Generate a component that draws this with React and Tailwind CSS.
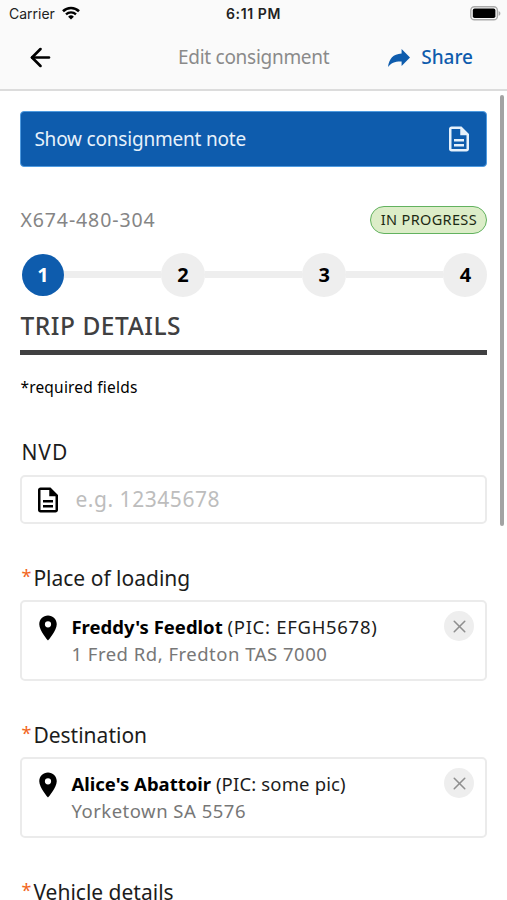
import { MdOutlineDescription, MdPlace } from "react-icons/md";
import { ArrowLeft, X } from "lucide-react";

const stops = [
  {
    label: "Place of loading",
    name: "Freddy's Feedlot",
    pic: "(PIC: EFGH5678)",
    picClass: "tracking-[0.7px]",
    address: "1 Fred Rd, Fredton TAS 7000",
  },
  {
    label: "Destination",
    name: "Alice's Abattoir",
    pic: "(PIC: some pic)",
    picClass: "tracking-[0.15px]",
    address: "Yorketown SA 5576",
  },
];

const StatusBar = () => (
  <div className="relative flex h-[26px] items-center justify-between pl-[9px] pr-[6px] font-['Inter','Liberation_Sans',sans-serif] text-[#222]">
    <div className="flex items-center gap-[7px] text-[14px]">
      <span>Carrier</span>
      <svg width="18" height="14" viewBox="0 0 18 14" fill="none">
        <path d="M1 5.2a11.5 11.5 0 0 1 16 0" stroke="#000" strokeWidth="2.6" />
        <path d="M4 8.4a7.2 7.2 0 0 1 10 0" stroke="#000" strokeWidth="2.3" />
        <path d="M9 13.6 6.1 10.7a4.2 4.2 0 0 1 5.8 0z" fill="#000" />
      </svg>
    </div>
    <span className="absolute left-1/2 -translate-x-1/2 whitespace-nowrap text-[14px] font-semibold tracking-[0.6px]">
      6:11 PM
    </span>
    <svg width="31" height="15" viewBox="0 0 31 15">
      <rect x="0.8" y="0.8" width="26.6" height="13" rx="3.6" fill="#fafafa" stroke="#aaa" strokeWidth="1.4" />
      <rect x="2.8" y="2.6" width="22.6" height="9.4" rx="1.8" fill="#000" />
      <path d="M28.6 5v4.8c1-.4 1.8-1.3 1.8-2.4s-.8-2-1.8-2.4z" fill="#aaa" />
    </svg>
  </div>
);

const Header = () => (
  <header className="h-[91px] border-b-2 border-[#dcdcdc] bg-[#fafafa]">
    <StatusBar />
    <div className="relative flex h-[62px] items-center justify-between pl-[26px] pr-[34px]">
      <button>
        <ArrowLeft size={29} strokeWidth={2.2} className="text-black" />
      </button>
      <h1 className="absolute left-[178px] whitespace-nowrap text-[19px] tracking-[-0.28px] text-[#8a8a8a]">
        Edit consignment
      </h1>
      <button className="flex items-center gap-[11px] text-[19px] font-medium text-[#0e5cad]">
        <svg width="22" height="18" viewBox="0 0 22 18" fill="currentColor" className="mt-px">
          <path d="M22 8.6 13.6 0v4.4C5 5 1.2 9.5 0 18c3.2-4.3 7-5.8 13.6-5.6V17z" />
        </svg>
        Share
      </button>
    </div>
  </header>
);

const Stepper = () => (
  <div className="flex h-[45px] items-center text-[20px] font-bold text-black">
    <div className="ml-[1.5px] flex size-[42px] items-center justify-center rounded-full bg-[#0e5cad] text-white">
      1
    </div>
    {[2, 3, 4].map((step) => (
      <div key={step} className="flex flex-1 items-center">
        <div className="h-[7px] flex-1 bg-[#eee]" />
        <div className="flex size-11 items-center justify-center rounded-full bg-[#eee]">
          {step}
        </div>
      </div>
    ))}
  </div>
);

const Label = ({ children, required }) => (
  <div className="flex h-8 items-center pl-px pt-0.5 text-[21px] text-[#1c1c1c]">
    {required && (
      <span className="w-3 pb-1.5 text-[18px] leading-5 text-[#f26522]">*</span>
    )}
    <span className="whitespace-nowrap">{children}</span>
  </div>
);

const StopCard = ({ stop }) => (
  <section className="mt-[38px]">
    <Label required>{stop.label}</Label>
    <div className="mt-[6px] flex h-[81px] items-start rounded-[5px] border-2 border-[#ebebeb] px-[11px]">
      <MdPlace size={30} className="mt-[11px] shrink-0 text-black" />
      <div className="ml-2 mt-[11px] flex-1 whitespace-nowrap text-[18.5px] leading-[27px] text-[#1c1c1c]">
        <p>
          <b className="text-black">{stop.name}</b>{" "}
          <span className={stop.picClass}>{stop.pic}</span>
        </p>
        <p className="tracking-[0.5px] text-[#777]">{stop.address}</p>
      </div>
      <button className="mt-[9px] flex size-[30px] items-center justify-center rounded-full bg-[#eee] text-[#8f8f8f]">
        <X size={21} strokeWidth={1.8} />
      </button>
    </div>
  </section>
);

export default function App() {
  return (
    <div className="relative h-[900px] w-[507px] overflow-hidden bg-white font-['Noto_Sans','Open_Sans',sans-serif]">
      <Header />
      <main className="pl-[20.4px] pt-5">
        <button className="flex h-14 w-[467px] items-center justify-between rounded-[4px] border border-[#4f9be0] bg-[#0e5cad] pl-[13px] pr-[12px] text-[19px] tracking-[-0.2px] text-[#e6f1fb]">
          Show consignment note
          <MdOutlineDescription size={30} />
        </button>
        <div className="mt-[39px] flex h-7 w-[467px] items-center justify-between">
          <span className="text-[19.5px] tracking-[0.9px] text-[#858585]">
            X674-480-304
          </span>
          <span className="flex h-7 w-[117px] items-center justify-center rounded-full border-[1.5px] border-[#62b25f] bg-[#dcedc8] text-[14.5px] tracking-[0.35px] text-[#1c2a14]">
            IN PROGRESS
          </span>
        </div>
        <div className="mt-[18px] w-[467px]">
          <Stepper />
        </div>
        <h2 className="mt-[12px] flex h-[41px] items-center pb-[7px] text-[24.5px] font-medium tracking-[0.55px] text-[#404041]">
          TRIP DETAILS
        </h2>
        <div className="h-[5px] w-[467px] bg-[#404041]" />
        <p className="mt-5 h-6 text-[15.5px] leading-6 tracking-[0.2px] text-black">
          *required fields
        </p>
        <section className="mt-[37px] w-[467px]">
          <div className="tracking-[1px]">
            <Label>NVD</Label>
          </div>
          <div className="mt-[7px] flex h-[49px] items-center rounded-[5px] border-2 border-[#ebebeb] pl-[11px]">
            <MdOutlineDescription size={30} className="shrink-0 text-black" />
            <input
              className="ml-3 w-96 text-[21px] tracking-[0.55px] outline-none placeholder:text-[#bdbdbd]"
              placeholder="e.g. 12345678"
            />
          </div>
        </section>
        <div className="w-[467px]">
          {stops.map((stop) => (
            <StopCard key={stop.label} stop={stop} />
          ))}
          <section className="mt-[38px]">
            <Label required>Vehicle details</Label>
          </section>
        </div>
      </main>
      <div className="absolute left-[500px] top-[95px] h-[431px] w-1 rounded-full bg-[#a3a3a3]" />
    </div>
  );
}
